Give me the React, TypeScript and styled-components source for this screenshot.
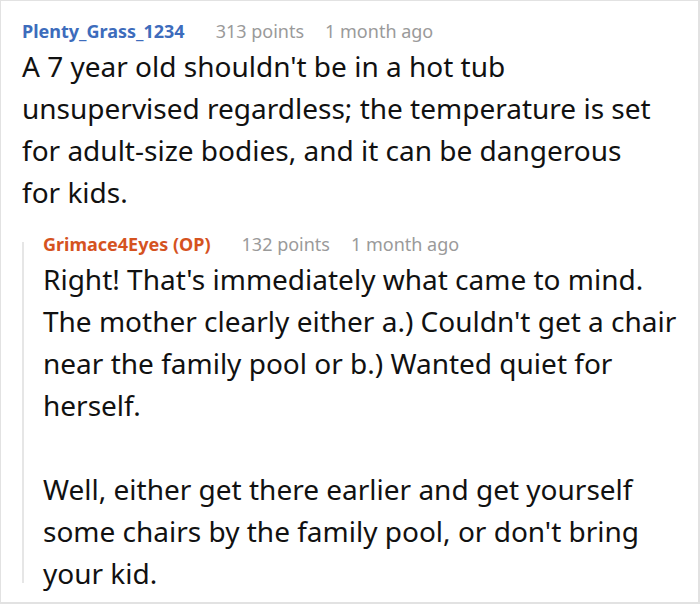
import React from 'react'
import styled, { createGlobalStyle } from 'styled-components'

const Global = createGlobalStyle`
    html, body {
        margin: 0;
        padding: 0;
        background: #fff;
    }
    body {
        font-family: 'Noto Sans', 'Open Sans', sans-serif;
        color: #111;
    }
`

const Frame = styled.div`
    box-sizing: border-box;
    width: 700px;
    height: 604px;
    border: 1px solid #e2e2e2;
    border-right-width: 2px;
    border-bottom-width: 2px;
    padding: 16px 0 0 21px;
    overflow: hidden;
`

const Meta = styled.div`
    display: flex;
    align-items: baseline;
    gap: 21px;
    font-size: 18px;
    line-height: 28px;
`

const Author = styled.span<{ $op?: boolean }>`
    font-weight: 700;
    color: ${p => (p.$op ? '#d5531f' : '#3d6cbc')};
    margin-right: 10px;
`

const Info = styled.span`
    color: #9a9a9a;
`

const Body = styled.div`
    width: 636px;
    font-size: 28px;
    line-height: 42px;

    p {
        margin: 0;
    }
    p + p {
        margin-top: 42px;
    }
`

const Reply = styled.div`
    position: relative;
    margin-top: 17px;
    padding-left: 21px;

    &::before {
        content: '';
        position: absolute;
        left: 0;
        top: 12px;
        bottom: 11px;
        width: 2px;
        background: #e6e6e6;
    }
`

type CommentProps = {
    author: string
    points: number
    time: string
    op?: boolean
    paragraphs: string[]
}

const Comment = ({ author, points, time, op, paragraphs }: CommentProps) => (
    <div>
        <Meta>
            <Author $op={op}>{author}</Author>
            <Info>{points} points</Info>
            <Info>{time}</Info>
        </Meta>
        <Body>
            {paragraphs.map((t, i) => (
                <p key={i}>{t}</p>
            ))}
        </Body>
    </div>
)

export default function App() {
    return (
        <>
            <Global />
            <Frame>
                <Comment
                    author="Plenty_Grass_1234"
                    points={313}
                    time="1 month ago"
                    paragraphs={[
                        "A 7 year old shouldn't be in a hot tub unsupervised regardless; the temperature is set for adult-size bodies, and it can be dangerous for kids.",
                    ]}
                />
                <Reply>
                    <Comment
                        author="Grimace4Eyes (OP)"
                        points={132}
                        time="1 month ago"
                        op
                        paragraphs={[
                            "Right! That's immediately what came to mind. The mother clearly either a.) Couldn't get a chair near the family pool or b.) Wanted quiet for herself.",
                            "Well, either get there earlier and get yourself some chairs by the family pool, or don't bring your kid.",
                        ]}
                    />
                </Reply>
            </Frame>
        </>
    )
}
